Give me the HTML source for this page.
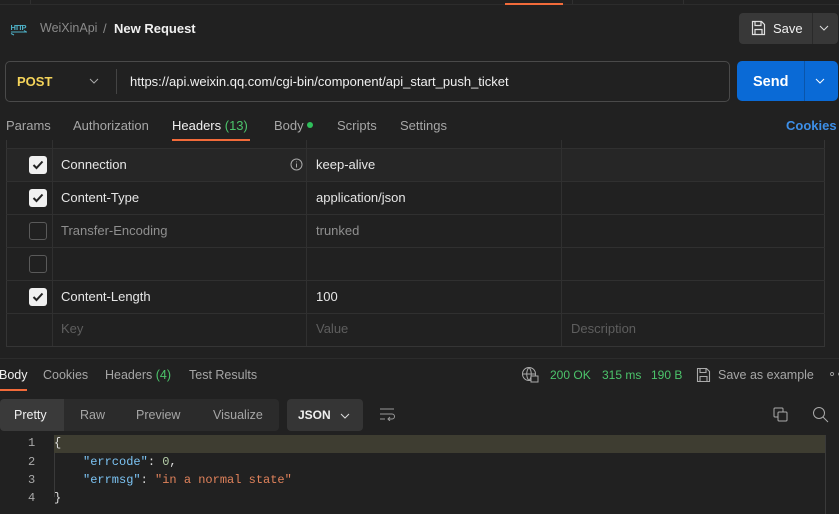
<!DOCTYPE html>
<html><head><meta charset="utf-8"><style>
*{box-sizing:border-box;margin:0;padding:0}
body{width:839px;height:514px;background:#212121;font-family:"Liberation Sans",sans-serif;color:#e6e6e6;position:relative;overflow:hidden;font-size:13px}
.a{position:absolute;white-space:nowrap}
.g{color:#a6a6a6}
.line{position:absolute;background:#303030}
.cb{position:absolute;left:29px;width:18px;height:18px;border-radius:3px}
.cb.on{background:#f0f0f0}
.cb.off{border:1.5px solid #5a5a5a}
.mono{font-family:"Liberation Mono",monospace;font-size:12px}
.s{font-size:12.5px}
</style></head><body>
<!-- top strip -->
<div class="line" style="left:0;top:4px;width:839px;height:1px;background:#2c2c2c"></div>
<div class="line" style="left:30px;top:0;width:1px;height:4px"></div>
<div class="line" style="left:572px;top:0;width:1px;height:4px"></div>
<div class="line" style="left:683px;top:0;width:1px;height:4px"></div>
<div class="a" style="left:505px;top:3px;width:58px;height:2px;background:#f26b3a"></div>

<!-- breadcrumb -->
<svg class="a" style="left:10px;top:21px" width="18" height="16" viewBox="0 0 18 16"><text x="0.5" y="9" font-size="7.5" fill="#4fb3c9" font-family="Liberation Sans" font-weight="bold" textLength="16">HTTP</text><path d="M1 11h16M14 9.5l2.5 1.5M4 14l-3-1.5" stroke="#4fb3c9" fill="none" stroke-width="1"/></svg>
<div class="a s" style="left:40px;top:21px;color:#8a8a8a">WeiXinApi</div>
<div class="a" style="left:103px;top:21px;color:#8a8a8a">/</div>
<div class="a" style="left:114px;top:21px;font-weight:bold;color:#f0f0f0">New Request</div>

<!-- save -->
<div class="a" style="left:739px;top:13px;width:99px;height:31px;background:#383838;border-radius:4px"></div>
<div class="a" style="left:812px;top:13px;width:1px;height:31px;background:#2a2a2a"></div>
<svg class="a" style="left:751px;top:20px" width="15" height="16" viewBox="0 0 15 16"><path d="M1.5 1.5h9l3 3v10h-12z M4 1.5v4h6v-4 M4 14.5v-5h7v5" stroke="#e0e0e0" fill="none" stroke-width="1.2"/></svg>
<div class="a" style="left:773px;top:21px;color:#f0f0f0">Save</div>
<svg class="a" style="left:819px;top:25px" width="10" height="6"><path d="M1 1l4 4 4-4" stroke="#ddd" fill="none"/></svg>

<!-- url bar -->
<div class="a" style="left:5px;top:61px;width:725px;height:41px;border:1px solid #4a4a4a;border-radius:5px"></div>
<div class="a" style="left:17px;top:74px;color:#f5d45a;font-weight:bold">POST</div>
<svg class="a" style="left:89px;top:78px" width="10" height="6"><path d="M1 1l4 4 4-4" stroke="#aaa" fill="none"/></svg>
<div class="a" style="left:116px;top:69px;width:1px;height:25px;background:#444"></div>
<div class="a" style="left:130px;top:74px;color:#f0f0f0">https://api.weixin.qq.com/cgi-bin/component/api_start_push_ticket</div>
<div class="a" style="left:737px;top:61px;width:101px;height:40px;background:#0a6ad6;border-radius:5px"></div>
<div class="a" style="left:804px;top:61px;width:1px;height:40px;background:#0a55aa"></div>
<div class="a" style="left:753px;top:74px;color:#fff;font-weight:bold;font-size:14.5px">Send</div>
<svg class="a" style="left:815px;top:78px" width="10" height="6"><path d="M1 1l4 4 4-4" stroke="#fff" fill="none"/></svg>

<!-- tabs -->
<div class="a g" style="left:6px;top:118px">Params</div>
<div class="a g" style="left:73px;top:118px">Authorization</div>
<div class="a" style="left:172px;top:118px;color:#f0f0f0">Headers <span style="color:#4cc46b">(13)</span></div>
<div class="a" style="left:172px;top:139px;width:78px;height:2px;background:#f26b3a"></div>
<div class="a g" style="left:274px;top:118px">Body</div>
<div class="a" style="left:307px;top:122px;width:6px;height:6px;border-radius:50%;background:#2fbf5b"></div>
<div class="a g" style="left:337px;top:118px">Scripts</div>
<div class="a g" style="left:400px;top:118px">Settings</div>
<div class="a" style="left:786px;top:118px;color:#3d8fe8;font-weight:bold">Cookies</div>

<!-- table -->
<div class="a" style="left:6px;top:148px;width:819px;height:33px;background:#262626"></div>
<div class="a" style="left:6px;top:140px;width:819px;height:207px;border:1px solid #353535;border-top:none"></div>
<div class="line" style="left:52px;top:140px;width:1px;height:206px"></div>
<div class="line" style="left:306px;top:140px;width:1px;height:206px"></div>
<div class="line" style="left:561px;top:140px;width:1px;height:206px"></div>
<div class="line" style="left:6px;top:148px;width:819px;height:1px"></div>
<div class="line" style="left:6px;top:181px;width:819px;height:1px"></div>
<div class="line" style="left:6px;top:214px;width:819px;height:1px"></div>
<div class="line" style="left:6px;top:247px;width:819px;height:1px"></div>
<div class="line" style="left:6px;top:280px;width:819px;height:1px"></div>
<div class="line" style="left:6px;top:313px;width:819px;height:1px"></div>

<div class="cb on" style="top:156px"></div><svg class="a" style="left:32px;top:160px" width="12" height="10"><path d="M1.5 5l3 3 6-6.5" stroke="#222" stroke-width="2" fill="none"/></svg>
<div class="cb on" style="top:189px"></div><svg class="a" style="left:32px;top:193px" width="12" height="10"><path d="M1.5 5l3 3 6-6.5" stroke="#222" stroke-width="2" fill="none"/></svg>
<div class="cb off" style="top:222px"></div>
<div class="cb off" style="top:255px"></div>
<div class="cb on" style="top:288px"></div><svg class="a" style="left:32px;top:292px" width="12" height="10"><path d="M1.5 5l3 3 6-6.5" stroke="#222" stroke-width="2" fill="none"/></svg>

<div class="a" style="left:61px;top:157px">Connection</div>
<svg class="a" style="left:290px;top:158px" width="13" height="13"><circle cx="6.5" cy="6.5" r="5.5" stroke="#aaa" fill="none"/><path d="M6.5 5.5v4M6.5 3.5v.8" stroke="#aaa"/></svg>
<div class="a" style="left:316px;top:157px">keep-alive</div>
<div class="a" style="left:61px;top:190px">Content-Type</div>
<div class="a" style="left:316px;top:190px">application/json</div>
<div class="a" style="left:61px;top:223px;color:#8f8f8f">Transfer-Encoding</div>
<div class="a" style="left:316px;top:223px;color:#8f8f8f">trunked</div>
<div class="a" style="left:61px;top:289px">Content-Length</div>
<div class="a" style="left:316px;top:289px">100</div>
<div class="a" style="left:61px;top:321px;color:#5e5e5e">Key</div>
<div class="a" style="left:316px;top:321px;color:#5e5e5e">Value</div>
<div class="a" style="left:571px;top:321px;color:#5e5e5e">Description</div>

<!-- response -->
<div class="line" style="left:0;top:358px;width:839px;height:1px;background:#2c2c2c"></div>
<div class="a s" style="left:-1px;top:368px;color:#f0f0f0">Body</div>
<div class="a" style="left:0;top:389px;width:27px;height:2px;background:#f26b3a"></div>
<div class="a g s" style="left:43px;top:368px">Cookies</div>
<div class="a g s" style="left:105px;top:368px">Headers <span style="color:#4cc46b">(4)</span></div>
<div class="a g s" style="left:189px;top:368px">Test Results</div>
<svg class="a" style="left:521px;top:366px" width="18" height="17" viewBox="0 0 18 17"><circle cx="8" cy="8" r="6.5" stroke="#aaa" fill="none"/><path d="M1.5 8h13M8 1.5c-3 3-3 10 0 13M8 1.5c3 3 3 10 0 13" stroke="#aaa" fill="none"/><rect x="10" y="10" width="7" height="6" fill="#212121" stroke="#aaa"/></svg>
<div class="a" style="left:550px;top:368px;color:#4cc46b;font-size:12px">200 OK</div>
<div class="a" style="left:602px;top:368px;color:#4cc46b;font-size:12px">315 ms</div>
<div class="a" style="left:651px;top:368px;color:#4cc46b;font-size:12px">190 B</div>
<svg class="a" style="left:696px;top:367px" width="15" height="16" viewBox="0 0 15 16"><path d="M1.5 1.5h9l3 3v10h-12z M4 1.5v4h6v-4 M4 14.5v-5h7v5" stroke="#aaa" fill="none" stroke-width="1.1"/></svg>
<div class="a g s" style="left:718px;top:368px">Save as example</div>
<div class="a g" style="left:828px;top:366px">∘∘</div>

<div class="a" style="left:0;top:399px;width:279px;height:32px;background:#2b2b2b;border-radius:4px"></div>
<div class="a" style="left:0;top:399px;width:64px;height:32px;background:#3a3a3a;border-radius:4px 0 0 4px"></div>
<div class="a s" style="left:14px;top:408px;color:#f0f0f0">Pretty</div>
<div class="a g s" style="left:80px;top:408px">Raw</div>
<div class="a g s" style="left:136px;top:408px">Preview</div>
<div class="a g s" style="left:213px;top:408px">Visualize</div>
<div class="a" style="left:287px;top:399px;width:76px;height:32px;background:#353535;border-radius:4px"></div>
<div class="a" style="left:298px;top:408px;color:#f0f0f0;font-weight:bold;font-size:12px">JSON</div>
<svg class="a" style="left:340px;top:413px" width="10" height="6"><path d="M1 1l4 4 4-4" stroke="#ddd" fill="none"/></svg>
<svg class="a" style="left:379px;top:407px" width="16" height="14"><path d="M1 2h14M1 7h12a2.5 2.5 0 010 5H9M11 10l-2 2 2 2M1 12h5" stroke="#999" fill="none"/></svg>
<svg class="a" style="left:773px;top:407px" width="16" height="16"><rect x="1" y="1" width="9" height="9" rx="1" stroke="#aaa" fill="none"/><rect x="5" y="5" width="9" height="9" rx="1" stroke="#aaa" fill="#212121"/></svg>
<svg class="a" style="left:812px;top:406px" width="17" height="17"><circle cx="7" cy="7" r="5.5" stroke="#aaa" fill="none"/><path d="M11 11l5 5" stroke="#aaa"/></svg>

<div class="a" style="left:54px;top:435px;width:771px;height:18px;background:#3e3d31"></div>
<div class="line" style="left:825px;top:435px;width:1px;height:79px;background:#3a3a3a"></div>
<div class="line" style="left:54px;top:453px;width:1px;height:44px;background:#3a3a3a"></div>
<div class="a mono" style="left:28px;top:436px;color:#aaa">1</div>
<div class="a mono" style="left:28px;top:455px;color:#aaa">2</div>
<div class="a mono" style="left:28px;top:473px;color:#aaa">3</div>
<div class="a mono" style="left:28px;top:491px;color:#aaa">4</div>
<div class="a mono" style="left:54px;top:436px;color:#ddd">{</div>
<div class="a mono" style="left:83px;top:455px"><span style="color:#7cc4f4">"errcode"</span><span style="color:#ddd">: </span><span style="color:#b5cea8">0</span><span style="color:#ddd">,</span></div>
<div class="a mono" style="left:83px;top:473px"><span style="color:#7cc4f4">"errmsg"</span><span style="color:#ddd">: </span><span style="color:#e0825b">"in a normal state"</span></div>
<div class="a mono" style="left:54px;top:491px;color:#ddd">}</div>
</body></html>
